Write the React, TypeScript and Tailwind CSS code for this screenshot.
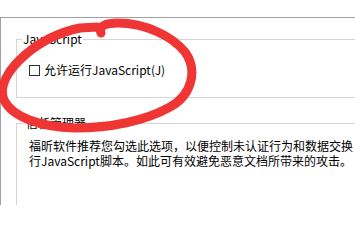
import React from "react";

export default function App() {
  const font = { fontFamily: '"Noto Sans CJK SC", "Liberation Sans", sans-serif' };
  return (
    <div
      className="relative w-[355px] h-[205px] overflow-hidden bg-white text-[12px] text-black"
      style={font}
    >
      <div className="pt-[17px] h-full">
        <div className="h-full border-t border-l border-[#a0a0a0] pl-[15px]">
          <fieldset className="mt-[13px] h-[67px] w-[400px] border border-[#d5d5d5] pl-[5px]">
            <legend className="px-[1px] leading-[16px]">JavaScript</legend>
            <div className="mt-[15px] ml-[7px] flex items-center gap-[4px] leading-[16px]">
              <span className="inline-block w-[11px] h-[11px] border border-[#333]" />
              <span>允许运行JavaScript(J)</span>
            </div>
          </fieldset>
          <fieldset className="mt-[17px] h-[120px] w-[400px] border border-[#d5d5d5] pl-[8px]">
            <legend className="px-[1px] leading-[16px]">信任管理器</legend>
            <p className="mt-[7px] ml-[4px] leading-[15px] whitespace-nowrap">
              福昕软件推荐您勾选此选项，以便控制未认证行为和数据交换
              <br />
              行JavaScript脚本。如此可有效避免恶意文档所带来的攻击。
            </p>
          </fieldset>
        </div>
      </div>
      <svg
        className="absolute left-0 top-0 pointer-events-none"
        width="355"
        height="205"
        viewBox="0 0 355 205"
      >
        <path
          d="M 101 33 C 98 26, 106 23, 118 23 C 145 23, 172 36, 185 52 C 198 70, 192 95, 170 107 C 145 121, 110 128, 75 128 C 40 127, 12 117, 4 100 C -2 85, 10 68, 25 55 C 40 42, 60 32, 80 28 L 97 27"
          fill="none"
          stroke="#f03535"
          strokeWidth="9"
          strokeLinecap="round"
          strokeLinejoin="round"
        />
      </svg>
    </div>
  );
}
